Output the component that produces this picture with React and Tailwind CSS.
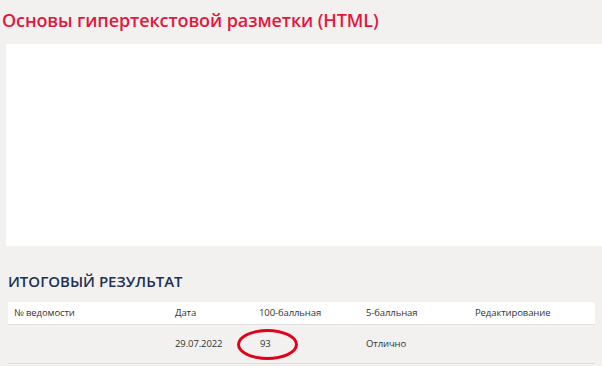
import React from 'react';

function App() {
  const cols = [
    { label: '№ ведомости', w: 'w-[167px]' },
    { label: 'Дата', w: 'w-[84px]' },
    { label: '100-балльная', w: 'w-[107px]' },
    { label: '5-балльная', w: 'w-[109px]' },
    { label: 'Редактирование', w: 'flex-1' },
  ];

  return (
    <div className="bg-[#f2f1f0] min-h-screen w-[602px] h-[366px] overflow-hidden" style={{ fontFamily: '"Open Sans", "Liberation Sans", sans-serif' }}>
      {/* Course title */}
      <h1 className="pl-[2px] pt-[6px] h-[44px] text-[18px] font-semibold text-[#e3173e] leading-[28px] tracking-[-0.1px]">
        Основы гипертекстовой разметки (HTML)
      </h1>

      {/* Empty content panel */}
      <div className="ml-[6px] h-[202px] bg-white" />

      {/* Result block */}
      <div className="pl-[8px] pr-[7px]">
        <h2 className="mt-[24px] h-[32px] text-[15px] font-semibold text-[#1c3152] leading-[22px]">
          ИТОГОВЫЙ РЕЗУЛЬТАТ
        </h2>

        <div className="text-[9.5px] text-[#333] tracking-[-0.1px]">
          <div className="flex items-center h-[23px] bg-white border-b border-[#e1e1e1] rounded-tr-[2px]">
            {cols.map((c, i) => (
              <div key={i} className={`${c.w} ${i === 0 ? 'pl-[6px]' : ''}`}>{c.label}</div>
            ))}
          </div>
          <div className="flex items-center h-[39px] border-b border-[#dedede]">
            <div className="w-[167px] pl-[6px]" />
            <div className="w-[84px]">29.07.2022</div>
            <div className="w-[107px] relative">
              <span className="pl-[1px]">93</span>
              <span className="absolute left-[-22px] top-[-8px] w-[61px] h-[31px] rounded-[50%] border-[3px] border-[#e3001b]" />
            </div>
            <div className="w-[109px]">Отлично</div>
            <div className="flex-1" />
          </div>
        </div>
      </div>
    </div>
  );
}

export default App;
